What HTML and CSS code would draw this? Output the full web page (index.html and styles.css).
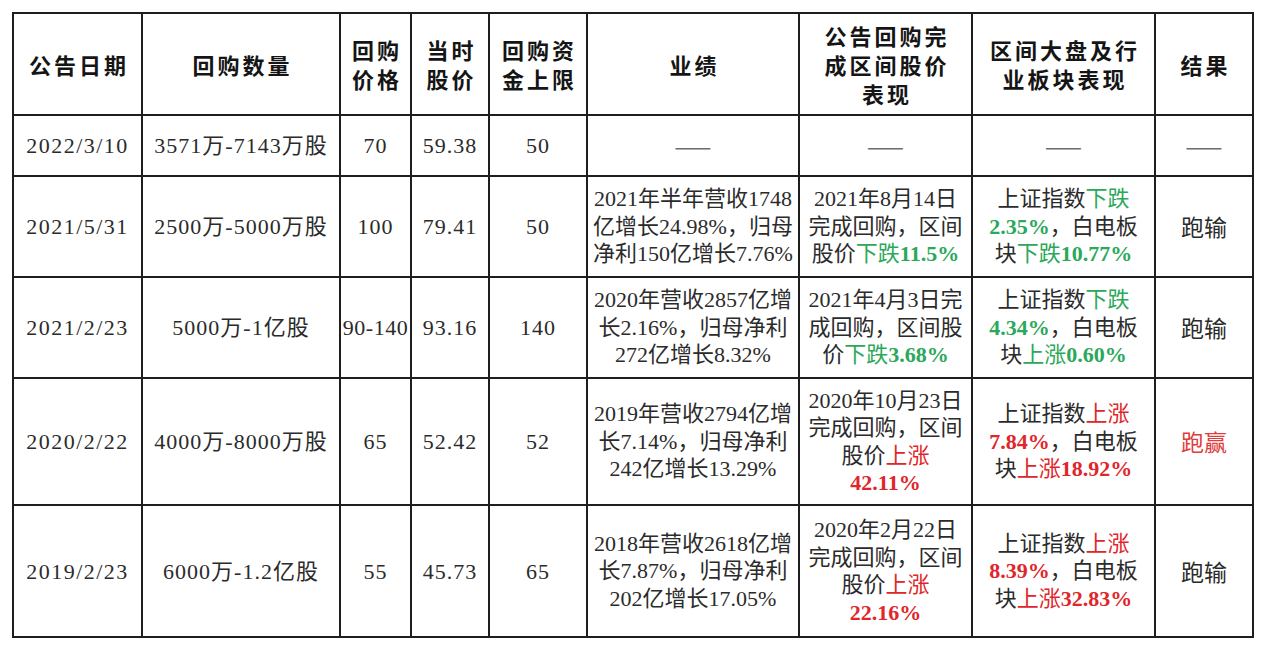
FILE: index.html
```html
<!DOCTYPE html>
<html lang="zh-CN">
<head>
<meta charset="utf-8">
<title>回购记录</title>
<link rel="stylesheet" href="styles.css">
</head>
<body>
<table class="buyback">
  <colgroup>
    <col class="c-date">
    <col class="c-qty">
    <col class="c-price">
    <col class="c-cur">
    <col class="c-cap">
    <col class="c-perf">
    <col class="c-range">
    <col class="c-market">
    <col class="c-result">
  </colgroup>
  <thead>
    <tr class="r-head">
      <th>公告日期</th>
      <th>回购数量</th>
      <th>回购<br>价格</th>
      <th>当时<br>股价</th>
      <th>回购资<br>金上限</th>
      <th>业绩</th>
      <th>公告回购完<br>成区间股价<br>表现</th>
      <th>区间大盘及行<br>业板块表现</th>
      <th>结果</th>
    </tr>
  </thead>
  <tbody>
    <tr class="r-1">
      <td class="date">2022/3/10</td>
      <td class="num">3571万-7143万股</td>
      <td class="num">70</td>
      <td class="num">59.38</td>
      <td class="num">50</td>
      <td class="dash">——</td>
      <td class="dash">——</td>
      <td class="dash">——</td>
      <td class="dash">——</td>
    </tr>
    <tr class="r-2">
      <td class="date">2021/5/31</td>
      <td class="num">2500万-5000万股</td>
      <td class="num">100</td>
      <td class="num">79.41</td>
      <td class="num">50</td>
      <td class="multi">2021年半年营收1748<br>亿增长24.98%，归母<br>净利150亿增长7.76%</td>
      <td class="multi">2021年8月14日<br>完成回购，区间<br>股价<span class="down">下跌<b>11.5%</b></span></td>
      <td class="multi">上证指数<span class="down">下跌</span><br><span class="down"><b>2.35%</b></span>，白电板<br>块<span class="down">下跌<b>10.77%</b></span></td>
      <td class="result">跑输</td>
    </tr>
    <tr class="r-3">
      <td class="date">2021/2/23</td>
      <td class="num">5000万-1亿股</td>
      <td class="num tight">90-140</td>
      <td class="num">93.16</td>
      <td class="num">140</td>
      <td class="multi">2020年营收2857亿增<br>长2.16%，归母净利<br>272亿增长8.32%</td>
      <td class="multi">2021年4月3日完<br>成回购，区间股<br>价<span class="down">下跌<b>3.68%</b></span></td>
      <td class="multi">上证指数<span class="down">下跌</span><br><span class="down"><b>4.34%</b></span>，白电板<br>块<span class="down">上涨<b>0.60%</b></span></td>
      <td class="result">跑输</td>
    </tr>
    <tr class="r-4">
      <td class="date">2020/2/22</td>
      <td class="num">4000万-8000万股</td>
      <td class="num">65</td>
      <td class="num">52.42</td>
      <td class="num">52</td>
      <td class="multi">2019年营收2794亿增<br>长7.14%，归母净利<br>242亿增长13.29%</td>
      <td class="multi">2020年10月23日<br>完成回购，区间<br>股价<span class="up">上涨</span><br><span class="up"><b>42.11%</b></span></td>
      <td class="multi">上证指数<span class="up">上涨</span><br><span class="up"><b>7.84%</b></span>，白电板<br>块<span class="up">上涨<b>18.92%</b></span></td>
      <td class="result win">跑赢</td>
    </tr>
    <tr class="r-5">
      <td class="date">2019/2/23</td>
      <td class="num">6000万-1.2亿股</td>
      <td class="num">55</td>
      <td class="num">45.73</td>
      <td class="num">65</td>
      <td class="multi">2018年营收2618亿增<br>长7.87%，归母净利<br>202亿增长17.05%</td>
      <td class="multi">2020年2月22日<br>完成回购，区间<br>股价<span class="up">上涨</span><br><span class="up"><b>22.16%</b></span></td>
      <td class="multi">上证指数<span class="up">上涨</span><br><span class="up"><b>8.39%</b></span>，白电板<br>块<span class="up">上涨<b>32.83%</b></span></td>
      <td class="result">跑输</td>
    </tr>
  </tbody>
</table>
</body>
</html>
```

FILE: styles.css
```css
html, body {
  margin: 0;
  padding: 0;
  background: #ffffff;
}

body {
  padding: 12px 0 0 12px;
  font-family: "Liberation Serif", "Noto Sans CJK SC", serif;
  color: #2b2b2b;
}

.buyback {
  border-collapse: collapse;
  table-layout: fixed;
  width: 1242px;
}

.c-date   { width: 129px; }
.c-qty    { width: 198px; }
.c-price  { width: 71px; }
.c-cur    { width: 78px; }
.c-cap    { width: 98px; }
.c-perf   { width: 212px; }
.c-range  { width: 173px; }
.c-market { width: 183px; }
.c-result { width: 98px; }

.buyback th,
.buyback td {
  border: 2px solid #1e1e1e;
  padding: 0;
  text-align: center;
  vertical-align: middle;
  white-space: nowrap;
  overflow: visible;
}

.buyback th {
  font-family: "Noto Sans CJK SC", sans-serif;
  font-weight: 700;
  font-size: 22px;
  line-height: 29px;
  letter-spacing: 3px;
  color: #151515;
  padding-left: 3px;
}

.buyback td {
  font-size: 22px;
  line-height: 27px;
}

.r-head { height: 102px; }
.r-1    { height: 61px; }
.r-2    { height: 101px; }
.r-3    { height: 101px; }
.r-4    { height: 127px; }
.r-5    { height: 132px; }

.buyback td.date {
  letter-spacing: 1.5px;
}

.buyback td.num {
  letter-spacing: 1px;
}

.buyback td.num.tight {
  letter-spacing: 0.5px;
}

.buyback td.dash {
  color: #6e6e6e;
  font-family: "Noto Sans CJK SC", sans-serif;
  font-size: 22px;
  letter-spacing: 0;
}

.buyback td.multi {
  line-height: 27.5px;
}

.buyback td.result {
  font-family: "Noto Sans CJK SC", sans-serif;
  font-size: 23px;
  color: #2a2a2a;
}

.buyback td.result.win {
  color: #e03c3c;
}

.down {
  color: #2ba85a;
}

.up {
  color: #e0262a;
}

.down b,
.up b {
  font-weight: 700;
}
```
